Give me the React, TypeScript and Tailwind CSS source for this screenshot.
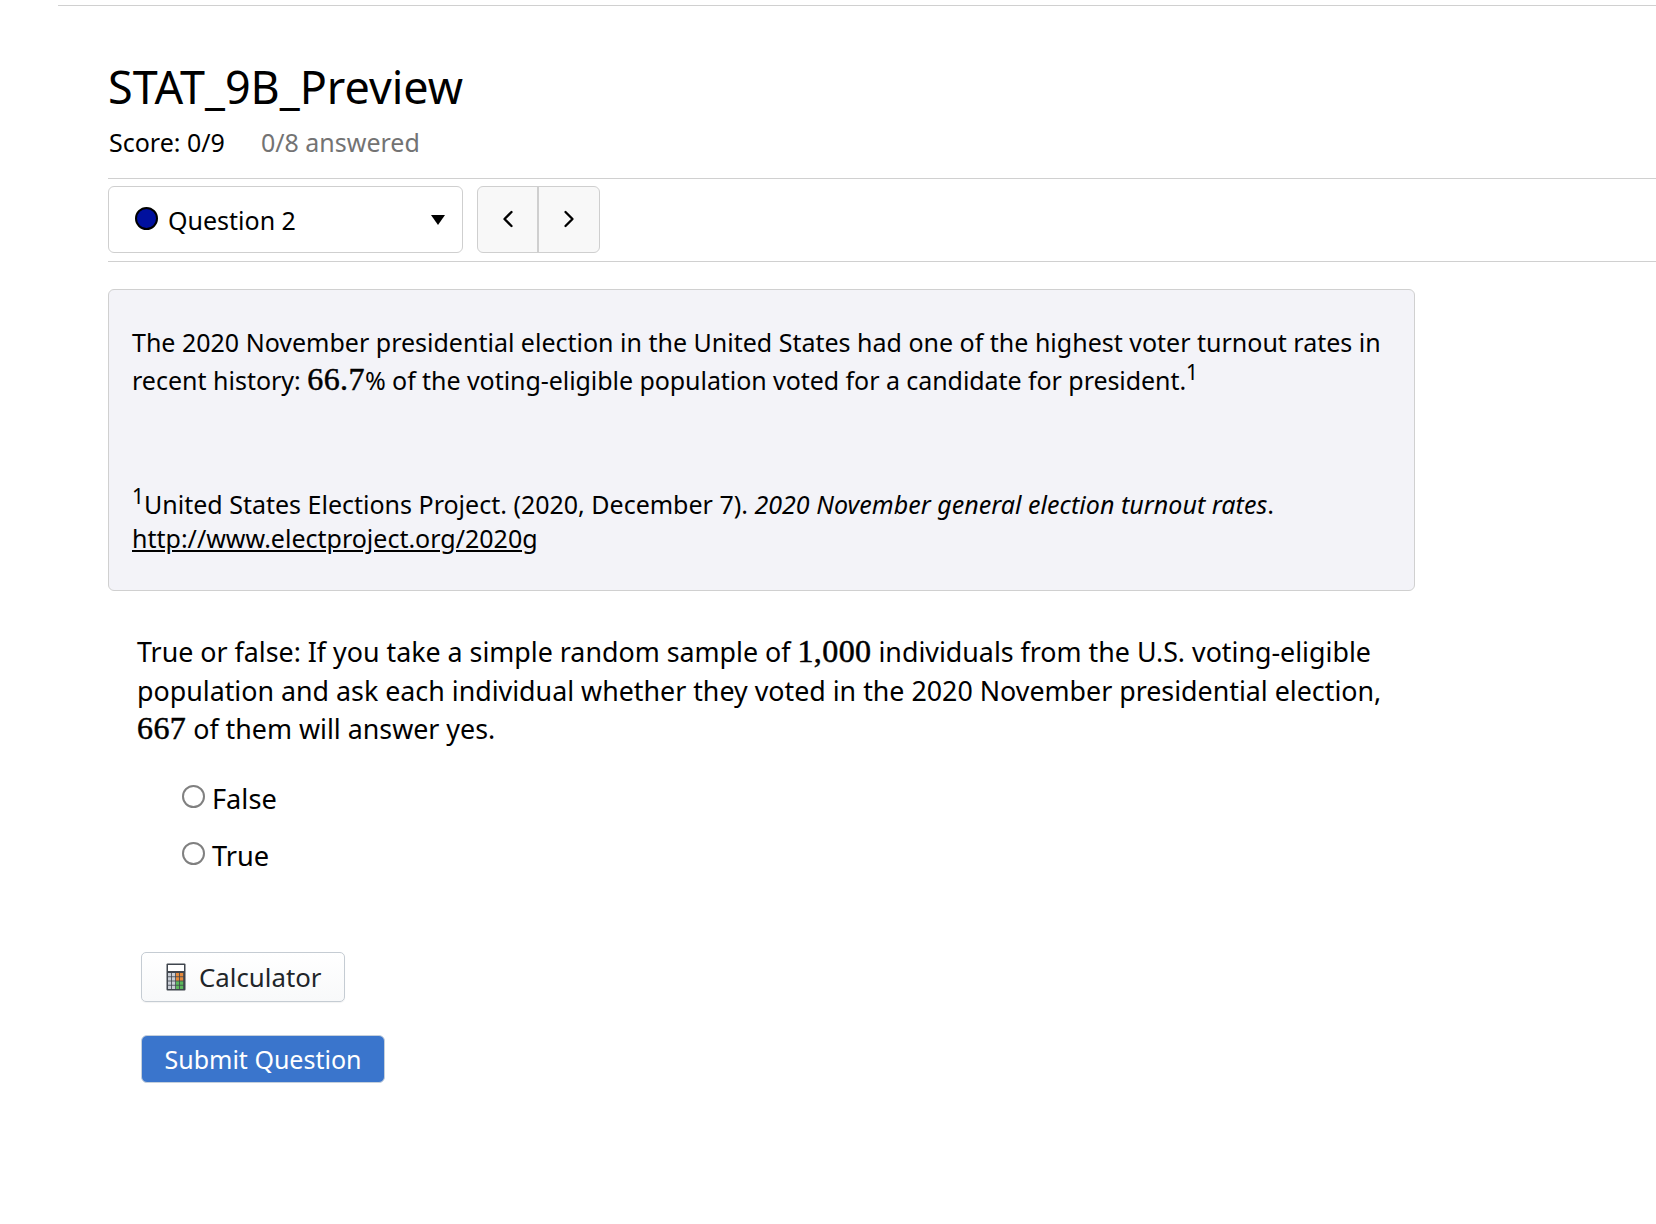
import { ChevronLeft, ChevronRight } from 'lucide-react'
import type { ReactNode } from 'react'

function Num({ children }: { children: ReactNode }) {
    return <span className="font-['Liberation_Serif',serif] text-[32px] leading-none tracking-[0.4px] [-webkit-text-stroke:0.5px_#000]">{children}</span>
}

function CalcIcon() {
    const keys = [
        ['#c9ced6', '#c9ced6', '#e58a3c', '#e58a3c'],
        ['#c9ced6', '#c9ced6', '#e58a3c', '#e58a3c'],
        ['#c9ced6', '#c9ced6', '#5cb85c', '#5cb85c'],
        ['#c9ced6', '#c9ced6', '#5cb85c', '#5cb85c'],
    ]
    return (
        <svg width="20" height="28" viewBox="0 0 20 28" className="shrink-0">
            <rect x="0.5" y="0.5" width="19" height="27" rx="1" fill="#3f454d" />
            <rect x="2" y="2" width="16" height="6" fill="#ffffff" />
            {keys.map((row, r) =>
                row.map((c, i) => (
                    <rect key={`${r}-${i}`} x={2 + i * 4} y={10 + r * 4.2} width="3.2" height="3.4" fill={c} />
                ))
            )}
        </svg>
    )
}

function Choice({ label, dy }: { label: string; dy: string }) {
    return (
        <label className={`flex items-center h-[38px] ${dy}`}>
            <span className="w-[23px] h-[23px] rounded-full border-2 border-[#808080] bg-white -mt-[6px]" />
            <span className="ml-[7px] text-[27.2px]">{label}</span>
        </label>
    )
}

export default function App() {
    return (
        <div className="min-h-[1224px] bg-white pt-[5px] pl-[58px] text-black font-['Noto_Sans',sans-serif]">
            <div className="border-t border-[#d0d0d0] pl-[50px]">
                {/* Header */}
                <h1 className="mt-[49px] text-[44.9px] leading-[64px] font-normal">STAT_9B_Preview</h1>
                <div className="mt-[6px] pl-[1px] flex gap-[36px] text-[25px] leading-[34px] pb-[19px]">
                    <span>Score: 0/9</span>
                    <span className="text-[#737373]">0/8 answered</span>
                </div>

                {/* Question nav */}
                <div className="border-y border-[#d0d0d0] pt-[7px] pb-[8px] flex gap-[14px]">
                    <div className="w-[355px] h-[67px] rounded-[6px] border border-[#cfcfcf] flex items-center pl-[27px] pr-[17px] text-[25px]">
                        <span className="w-[23px] h-[23px] rounded-full bg-[#00109e] border-2 border-black -mt-[3px] -ml-[1px]" />
                        <span className="ml-[10px] mt-[2px]">Question 2</span>
                        <svg width="14" height="10" viewBox="0 0 14 10" className="ml-auto mt-[1px]">
                            <path d="M0 0 H14 L7 10 Z" fill="#000" />
                        </svg>
                    </div>
                    <div className="w-[123px] h-[67px] rounded-[6px] border border-[#cfcfcf] bg-[#f8f8f8] flex">
                        <div className="w-[61px] flex items-center justify-center border-r-2 border-[#cfcfcf] pb-[2px]">
                            <ChevronLeft size={28} strokeWidth={2} />
                        </div>
                        <div className="flex-1 flex items-center justify-center pb-[2px]">
                            <ChevronRight size={28} strokeWidth={2} />
                        </div>
                    </div>
                </div>

                {/* Preamble */}
                <div className="mt-[27px] w-[1307px] h-[302px] rounded-[6px] border border-[#d0d0d0] bg-[#f3f3f8] px-[23px] pt-[33px] text-[25px]">
                    <p className="leading-[38px]">
                        The 2020 November presidential election in the United States had one of the highest voter turnout rates in recent history: <Num>66.7</Num>
                        <span className="tracking-[-0.06px]">% of the voting-eligible population voted for a candidate for president.</span>
                        <sup className="text-[21px]">1</sup>
                    </p>
                    <p className="mt-[88px] leading-[34px]">
                        <sup className="text-[21px]">1</sup>United States Elections Project. (2020, December 7). <em className="tracking-[0.04px]">2020 November general election turnout rates</em>.{' '}
                        <a className="underline">http://www.electproject.org/2020g</a>
                    </p>
                </div>

                {/* Question */}
                <div className="mt-[42px] pl-[29px] w-[1307px] pr-[20px] text-[26.8px] leading-[38.5px]">
                    <p>
                        True or false: If you take a simple random sample of <Num>1,000</Num> individuals from the U.S. voting-eligible population and ask each individual whether they voted in the 2020 November presidential election, <Num>667</Num> of them will answer yes.
                    </p>
                </div>

                {/* Choices */}
                <div className="mt-[32px] pl-[74px]">
                    <Choice label="False" dy="" />
                    <Choice label="True" dy="mt-[19px]" />
                </div>

                {/* Actions */}
                <div className="mt-[76px] pl-[33px] flex flex-col items-start">
                    <button className="w-[204px] h-[50px] rounded-[5px] border border-[#c5ccd3] bg-gradient-to-b from-white to-[#f8f9fa] flex items-center pl-[24px] text-[25.8px] text-[#212529] shadow-[0_1px_1px_rgba(0,0,0,0.05)]">
                        <CalcIcon />
                        <span className="ml-[13px] mt-[1px]">Calculator</span>
                    </button>
                    <button className="mt-[33px] w-[244px] h-[48px] rounded-[6px] border border-[#c5d0dc] bg-[#3a75cc] text-white text-[25px] flex items-center justify-center pt-[2px]">
                        Submit Question
                    </button>
                </div>
            </div>
        </div>
    )
}
